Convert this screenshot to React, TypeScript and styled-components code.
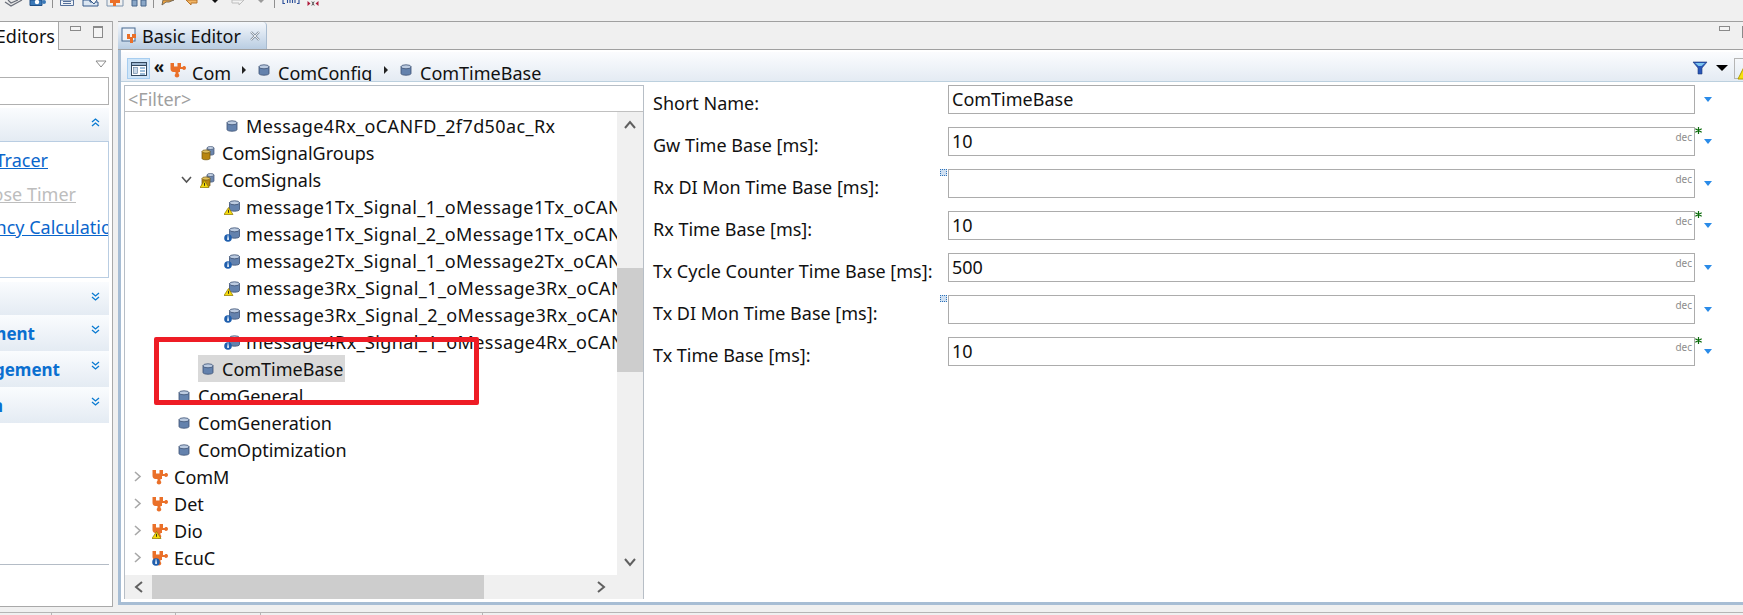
import styled, {createGlobalStyle} from 'styled-components';

type Overlay = 'warn' | 'info' | undefined;

interface TreeNode {
  label: string;
  depth: number;
  icon: 'cyl' | 'group' | 'module';
  overlay?: Overlay;
  arrow?: 'open' | 'closed';
  selected?: boolean;
}

const treeNodes: TreeNode[] = [
  {label: 'Message4Rx_oCANFD_2f7d50ac_Rx', depth: 3, icon: 'cyl'},
  {label: 'ComSignalGroups', depth: 2, icon: 'group'},
  {label: 'ComSignals', depth: 2, icon: 'group', overlay: 'warn', arrow: 'open'},
  {label: 'message1Tx_Signal_1_oMessage1Tx_oCANFD_2f7d50ac_Tx', depth: 3, icon: 'cyl', overlay: 'warn'},
  {label: 'message1Tx_Signal_2_oMessage1Tx_oCANFD_2f7d50ac_Tx', depth: 3, icon: 'cyl', overlay: 'info'},
  {label: 'message2Tx_Signal_1_oMessage2Tx_oCANFD_2f7d50ac_Tx', depth: 3, icon: 'cyl', overlay: 'info'},
  {label: 'message3Rx_Signal_1_oMessage3Rx_oCANFD_2f7d50ac_Rx', depth: 3, icon: 'cyl', overlay: 'warn'},
  {label: 'message3Rx_Signal_2_oMessage3Rx_oCANFD_2f7d50ac_Rx', depth: 3, icon: 'cyl', overlay: 'info'},
  {label: 'message4Rx_Signal_1_oMessage4Rx_oCANFD_2f7d50ac_Rx', depth: 3, icon: 'cyl', overlay: 'info'},
  {label: 'ComTimeBase', depth: 2, icon: 'cyl', selected: true},
  {label: 'ComGeneral', depth: 1, icon: 'cyl'},
  {label: 'ComGeneration', depth: 1, icon: 'cyl'},
  {label: 'ComOptimization', depth: 1, icon: 'cyl'},
  {label: 'ComM', depth: 0, icon: 'module', arrow: 'closed'},
  {label: 'Det', depth: 0, icon: 'module', arrow: 'closed'},
  {label: 'Dio', depth: 0, icon: 'module', overlay: 'warn', arrow: 'closed'},
  {label: 'EcuC', depth: 0, icon: 'module', overlay: 'info', arrow: 'closed'},
];

const formRows = [
  {label: 'Short Name:', value: 'ComTimeBase'},
  {label: 'Gw Time Base [ms]:', value: '10', dec: true, star: true},
  {label: 'Rx DI Mon Time Base [ms]:', value: '', dec: true, marker: true},
  {label: 'Rx Time Base [ms]:', value: '10', dec: true, star: true},
  {label: 'Tx Cycle Counter Time Base [ms]:', value: '500', dec: true},
  {label: 'Tx DI Mon Time Base [ms]:', value: '', dec: true, marker: true},
  {label: 'Tx Time Base [ms]:', value: '10', dec: true, star: true},
];

function OverlayMark({kind}:{kind:Overlay}){
  if(kind === 'warn'){
    return (
      <g>
        <path d="M4.5 8.5 L9 15.5 H0 Z" fill="#f5d90a" stroke="#8a7500" strokeWidth="0.7"/>
        <rect x="4.1" y="10.8" width="0.9" height="3" fill="#222"/>
      </g>
    );
  }
  if(kind === 'info'){
    return (
      <g>
        <circle cx="4" cy="12" r="3.8" fill="#1f5fae"/>
        <rect x="3.3" y="11.2" width="1.5" height="2.8" fill="#fff"/>
        <rect x="3.3" y="9.6" width="1.5" height="1" fill="#fff"/>
      </g>
    );
  }
  return null;
}

function CylIcon({overlay}:{overlay?:Overlay}){
  return (
    <svg width="16" height="16" viewBox="0 0 16 16">
      <g transform={overlay ? 'translate(2.5,-1)' : undefined}>
        <path d="M3 4.5 V11.5 C3 13.8 13 13.8 13 11.5 V4.5 Z" fill="#6482ad" stroke="#3a4f72" strokeWidth="0.8"/>
        <ellipse cx="8" cy="4.8" rx="5" ry="2" fill="#bccbe0" stroke="#3a4f72" strokeWidth="0.8"/>
      </g>
      <OverlayMark kind={overlay}/>
    </svg>
  );
}

function GroupIcon({overlay}:{overlay?:Overlay}){
  return (
    <svg width="16" height="16" viewBox="0 0 16 16">
      <path d="M7 3 V9 C7 10.5 14 10.5 14 9 V3 Z" fill="#6c86ad" stroke="#3f5273" strokeWidth="0.7"/>
      <ellipse cx="10.5" cy="3" rx="3.5" ry="1.5" fill="#c3d0e2" stroke="#3f5273" strokeWidth="0.7"/>
      <path d="M2 6.5 V13.5 C2 15.2 10 15.2 10 13.5 V6.5 Z" fill="#b8860f" stroke="#6d5208" strokeWidth="0.7"/>
      <ellipse cx="6" cy="6.5" rx="4" ry="1.6" fill="#e2c15d" stroke="#6d5208" strokeWidth="0.7"/>
      <OverlayMark kind={overlay}/>
    </svg>
  );
}

function ModuleIcon({overlay}:{overlay?:Overlay}){
  return (
    <svg width="16" height="16" viewBox="0 0 16 16">
      <path d="M0.5 1 H4 V4.5 H7.5 V1 H11 V5 H12.5 C13 3.6 16 3.8 16 6 C16 8.2 13 8.4 12.5 7 H10 V10 H8.5 V12 C9.8 12.6 9.6 15.4 7 15.4 C4.4 15.4 4.2 12.6 5.5 12 V10 H3.5 C1.5 10 0.5 8.5 0.5 6.5 Z" fill="#ea7029"/>
      <OverlayMark kind={overlay}/>
    </svg>
  );
}

function NodeIcon({icon, overlay}:{icon:TreeNode['icon'], overlay?:Overlay}){
  if(icon === 'group') return <GroupIcon overlay={overlay}/>;
  if(icon === 'module') return <ModuleIcon overlay={overlay}/>;
  return <CylIcon overlay={overlay}/>;
}

function Chevron({dir}:{dir:'up'|'down'}){
  const first = dir === 'down' ? 'M1 1 L4.5 4 L8 1' : 'M1 4 L4.5 1 L8 4';
  const second = dir === 'down' ? 'M1 5 L4.5 8 L8 5' : 'M1 8 L4.5 5 L8 8';
  return (
    <ChevronSvg width="9" height="9" viewBox="0 0 9 9">
      <path d={first} fill="none" stroke="#0a7ad1" strokeWidth="1.3"/>
      <path d={second} fill="none" stroke="#0a7ad1" strokeWidth="1.3"/>
    </ChevronSvg>
  );
}

function ScrollArrow({d}:{d:string}){
  return (
    <svg width="12" height="12" viewBox="0 0 12 12">
      <path d={d} fill="none" stroke="#606060" strokeWidth="2"/>
    </svg>
  );
}

// the toolbar is cut by the top of the picture: only the lower part of each icon shows
const toolGroups = [
  {slot: 24, lead: 2, icons: [
    <svg width="20" height="7" viewBox="0 0 20 7"><path d="M1 2 L7 6 L18 0 M4 0 L7 3 L14 0" fill="#e8e8e8" stroke="#6a6f7a" strokeWidth="1.2"/></svg>,
    <svg width="18" height="7" viewBox="0 0 18 7"><path d="M1 0 V5.5 H13 V0 Z" fill="#3b79b8" stroke="#1f4f86"/><circle cx="8" cy="2" r="2.2" fill="#fff"/><circle cx="15" cy="2" r="2" fill="#3b79b8"/></svg>,
  ]},
  {slot: 24, lead: 2, icons: [
    <svg width="14" height="7" viewBox="0 0 14 7"><path d="M0.5 0 V5.5 H13.5 V0 Z" fill="#eef2f7" stroke="#55709a"/><path d="M3 1.5 H11 M3 3.5 H11" stroke="#55709a"/></svg>,
    <svg width="18" height="7" viewBox="0 0 18 7"><path d="M1 0 V6 H16 V2 H8 V0 Z" fill="#dbe6f2" stroke="#34598a"/><path d="M8 0 L12 4 L15 0" fill="#f7f7f7" stroke="#34598a"/></svg>,
    <svg width="18" height="7" viewBox="0 0 18 7"><path d="M1 6 H17 M1 0 V6 M17 0 V6" fill="none" stroke="#7d93ad"/><path d="M4 0 H14 V3 H10 V6 H7 V3 H4 Z" fill="#ea7029"/></svg>,
    <svg width="16" height="7" viewBox="0 0 16 7"><path d="M1 0 V6 H6 V0 Z M10 0 V6 H15 V0 Z" fill="#8ba7c7" stroke="#47658a"/></svg>,
  ]},
  {slot: 23, lead: 3, icons: [
    <svg width="16" height="7" viewBox="0 0 16 7"><path d="M2 0 L1 5 L5 2 H8 L13 0 Z" fill="#f0a33c" stroke="#7b6a52"/></svg>,
    <svg width="16" height="7" viewBox="0 0 16 7"><path d="M2 0 L7 5 V3 H13 V0 Z" fill="#f1b565" stroke="#b8742a"/></svg>,
    <svg width="8" height="5" viewBox="0 0 8 5"><path d="M1 0 H7 L4 3 Z" fill="#111"/></svg>,
    <svg width="16" height="7" viewBox="0 0 16 7"><path d="M14 0 L9 5 V3 H2 V0 Z" fill="#f3f3f3" stroke="#bdbdbd"/></svg>,
    <svg width="8" height="5" viewBox="0 0 8 5"><path d="M1 0 H7 L4 3 Z" fill="#9a9a9a"/></svg>,
  ]},
  {slot: 22, lead: 5, icons: [
    <svg width="18" height="5" viewBox="0 0 18 5"><path d="M1 0 V3.5 H3 M17 0 V3.5 H15 M5.5 0 V3 M8 0 V3 M10.5 0 V3 M13 0 V3" fill="none" stroke="#2b4f9a" strokeWidth="1.1"/></svg>,
    <svg width="12" height="7" viewBox="0 0 12 7"><path d="M0.5 1 L3.5 3.5 L0.5 6 Z M11.5 1 L8.5 3.5 L11.5 6 Z" fill="#b01c3c"/><path d="M4.8 1.5 L7.2 5.5 M7.2 1.5 L4.8 5.5" stroke="#5a5a5a"/></svg>,
  ]},
];

export default function App(){
  return (
    <>
      <GlobalStyle/>
      <Page>
        <Toolbar>
          {toolGroups.map((group, i) => (
            <ToolGroup key={i} $lead={group.lead}>
              {group.icons.map((icon, j) => <ToolSlot key={j} $width={group.slot}>{icon}</ToolSlot>)}
            </ToolGroup>
          ))}
        </Toolbar>
        <Main>
          <LeftPanel>
            <TabStrip>
              <LeftTab><span>Project Editors</span></LeftTab>
              <WindowButtons>
                <MinButton/>
                <MaxButton/>
              </WindowButtons>
            </TabStrip>
            <LeftBody>
              <MenuRow>
                <svg width="12" height="8" viewBox="0 0 12 8"><path d="M1 1 H11 L6 7 Z" fill="#fff" stroke="#8a8a8a"/></svg>
              </MenuRow>
              <SearchBox/>
              <SectionHeader $height={33} $top={3}>
                <Chevron dir="up"/>
              </SectionHeader>
              <SectionBox>
                <LinkRow $end={60}><a>Stack Tracer</a></LinkRow>
                <LinkRow $end={32} $disabled><a>Purpose Timer</a></LinkRow>
                <LinkRow $end={-15}><a>Frequency Calculation</a></LinkRow>
              </SectionBox>
              <SectionHeader $height={33} $top={4}><Chevron dir="down"/></SectionHeader>
              <SectionHeader $height={36}><SectionTitle $end={74}>Development</SectionTitle><Chevron dir="down"/></SectionHeader>
              <SectionHeader $height={36}><SectionTitle $end={49}>Management</SectionTitle><Chevron dir="down"/></SectionHeader>
              <SectionHeader $height={36}><SectionTitle $end={106}>Validation</SectionTitle><Chevron dir="down"/></SectionHeader>
              <LeftFooter/>
            </LeftBody>
          </LeftPanel>
          <EditorPanel>
            <TabStrip>
              <EditorTab>
                <TabIcon width="18" height="18" viewBox="0 0 18 18">
                  <rect x="1" y="1" width="13" height="13" fill="#eef3f9" stroke="#46698f"/>
                  <path d="M6 7 H9 V10 H11 V7 H15 V11 H12 V16 H9 V12 H6 Z" fill="#ea7029"/>
                </TabIcon>
                <span>Basic Editor</span>
                <CloseIcon width="12" height="12" viewBox="0 0 12 12">
                  <path d="M2 2 L10 10 M10 2 L2 10" stroke="#8d99a6" strokeWidth="2.4"/>
                  <path d="M2 2 L10 10 M10 2 L2 10" stroke="#fff" strokeWidth="0.8"/>
                </CloseIcon>
              </EditorTab>
              <EditorWindowButtons>
                <MinButton/>
                <MaxButton/>
              </EditorWindowButtons>
            </TabStrip>
            <EditorBody>
              <Breadcrumb>
                <CrumbToggle>
                  <svg width="16" height="14" viewBox="0 0 16 14">
                    <rect x="0.5" y="0.5" width="15" height="13" fill="#fff" stroke="#33495f"/>
                    <rect x="0.5" y="0.5" width="15" height="3" fill="#9db6cf" stroke="#33495f"/>
                    <rect x="2.5" y="5.5" width="4" height="6" fill="#c8d8e8" stroke="#5a7a99" strokeWidth="0.6"/>
                    <path d="M9 6 H14 M9 9 H14 M9 12 H14" stroke="#3f7fb5"/>
                  </svg>
                </CrumbToggle>
                <CrumbBack>«</CrumbBack>
                <CrumbIcon $left={2}><ModuleIcon/></CrumbIcon>
                <CrumbText $width={50}>Com</CrumbText>
                <CrumbSep/>
                <CrumbIcon><CylIcon/></CrumbIcon>
                <CrumbText $width={106}>ComConfig</CrumbText>
                <CrumbSep/>
                <CrumbIcon><CylIcon/></CrumbIcon>
                <CrumbText $width={130}>ComTimeBase</CrumbText>
                <CrumbTools>
                  <svg width="16" height="14" viewBox="0 0 16 14">
                    <path d="M1 1 H15 L10 7 V13 H6 V7 Z" fill="#2a56b8" stroke="#1b3a7a" strokeWidth="0.6"/>
                    <path d="M3 2 H13 L9.5 5 H6.5 Z" fill="#7cc4ef"/>
                  </svg>
                  <MenuArrow/>
                  <WarnToggle>
                    <svg width="16" height="16" viewBox="0 0 16 16"><path d="M8 1 L15 15 H1 Z" fill="#f7e30a" stroke="#b19c00"/></svg>
                  </WarnToggle>
                </CrumbTools>
              </Breadcrumb>
              <SplitArea>
                <TreePane>
                  <FilterBox>&lt;Filter&gt;</FilterBox>
                  <TreeScrollRow>
                    <TreeList>
                      {treeNodes.map((node) => (
                        <TreeRow key={node.label} $depth={node.depth}>
                          <Twisty>
                            {node.arrow === 'open' && <svg width="11" height="8" viewBox="0 0 11 8"><path d="M1 1 L5.5 6 L10 1" fill="none" stroke="#555" strokeWidth="1.6"/></svg>}
                            {node.arrow === 'closed' && <svg width="8" height="11" viewBox="0 0 8 11"><path d="M1 1 L6 5.5 L1 10" fill="none" stroke="#a8a8a8" strokeWidth="1.6"/></svg>}
                          </Twisty>
                          <NodeLabel $selected={node.selected} $wide={node.label.includes('_')}>
                            <NodeIcon icon={node.icon} overlay={node.overlay}/>
                            <span>{node.label}</span>
                          </NodeLabel>
                        </TreeRow>
                      ))}
                    </TreeList>
                    <VScroll>
                      <ScrollButton><ScrollArrow d="M1 9 L6 3 L11 9"/></ScrollButton>
                      <VTrack><VThumb/></VTrack>
                      <ScrollButton><ScrollArrow d="M1 3 L6 9 L11 3"/></ScrollButton>
                    </VScroll>
                  </TreeScrollRow>
                  <HScroll>
                    <HButton><ScrollArrow d="M9 1 L3 6 L9 11"/></HButton>
                    <HThumb/>
                    <HButton><ScrollArrow d="M3 1 L9 6 L3 11"/></HButton>
                  </HScroll>
                </TreePane>
                <FormPane>
                  {formRows.map((row) => (
                    <FormRow key={row.label}>
                      <FormLabel>{row.label}</FormLabel>
                      <FieldWrap>
                        {row.marker && <FieldMarker/>}
                        <Field>
                          {row.value}
                          {row.dec && <DecTag>dec</DecTag>}
                        </Field>
                        {row.star && (
                          <FieldStar width="7" height="7" viewBox="0 0 7 7">
                            <path d="M3.5 0 V7 M0.3 1.7 L6.7 5.3 M6.7 1.7 L0.3 5.3" stroke="#0b6b0b" strokeWidth="1.2"/>
                          </FieldStar>
                        )}
                      </FieldWrap>
                      <FieldMenu/>
                    </FormRow>
                  ))}
                </FormPane>
              </SplitArea>
            </EditorBody>
          </EditorPanel>
        </Main>
        <StatusStrip>
          <StatusCell $width={52}/>
          <StatusCell $width={8} $blank/>
          <StatusCell $width={116}/>
          <StatusCell $width={85}/>
          <StatusCell $width={222}/>
        </StatusStrip>
        <Annotation/>
      </Page>
    </>
  );
}

const GlobalStyle = createGlobalStyle`
  html, body {
    margin:0;
    padding:0;
    background:#f0f0f0;
    overflow:hidden;
  }
`

const Page = styled.div`
  position:relative;
  width:1743px;
  height:615px;
  display:flex;
  flex-direction:column;
  overflow:hidden;
  background:#f0f0f0;
  font-family:"Noto Sans", "Noto Sans CJK SC", sans-serif;
  font-size:18px;
  color:#111;
`

const Toolbar = styled.div`
  height:21px;
  display:flex;
  overflow:hidden;
  flex:none;
`

const ToolGroup = styled.div<{$lead:number}>`
  display:flex;
  height:8px;
  padding-left:${props => props.$lead}px;
  padding-right:2px;
  border-right:1px solid #8f8f8f;
  &:last-child{border-right:0;}
`

const ToolSlot = styled.div<{$width:number}>`
  width:${props => props.$width}px;
  height:7px;
  display:flex;
  justify-content:center;
  align-items:flex-start;
`

const Main = styled.div`
  flex:1;
  display:flex;
  gap:5px;
  min-height:0;
`

const LeftPanel = styled.div`
  width:112px;
  margin-bottom:5px;
  display:flex;
  flex-direction:column;
  border-right:1px solid #a9a9a9;
  border-bottom:1px solid #a9a9a9;
  box-sizing:content-box;
  flex:none;
`

const TabStrip = styled.div`
  height:27px;
  display:flex;
  align-items:stretch;
  border-top:1px solid #a0a0a0;
  border-bottom:1px solid #a0a0a0;
  background:#f0f0f0;
  flex:none;
`

const LeftTab = styled.div`
  width:58px;
  display:flex;
  justify-content:flex-end;
  align-items:center;
  overflow:hidden;
  background:#fff;
  border-right:1px solid #a9a9a9;
  margin-bottom:-1px;
  white-space:nowrap;
  & > span{
    padding-right:3px;
    line-height:24px;
  }
`

const WindowButtons = styled.div`
  display:flex;
  gap:12px;
  padding:4px 0 0 11px;
`

const MinButton = styled.div`
  width:9px;
  height:3px;
  border:1px solid #8a8a8a;
  background:#f4f4f4;
`

const MaxButton = styled.div`
  width:8px;
  height:9px;
  border:1px solid #8a8a8a;
  border-top-width:2px;
  background:#f4f4f4;
`

const LeftBody = styled.div`
  flex:1;
  background:#fff;
  display:flex;
  flex-direction:column;
  padding-right:3px;
  min-height:0;
`

const MenuRow = styled.div`
  height:27px;
  display:flex;
  justify-content:flex-end;
  align-items:center;
  padding-right:2px;
  flex:none;
`

const SearchBox = styled.div`
  height:28px;
  box-sizing:border-box;
  border:1px solid #b0b0b0;
  border-left:0;
  flex:none;
`

const SectionHeader = styled.div<{$height:number, $top?:number}>`
  position:relative;
  height:${props => props.$height}px;
  margin-top:${props => props.$top ?? 0}px;
  background:linear-gradient(#fafcfe, #e4ebf3);
  overflow:hidden;
  flex:none;
`

const ChevronSvg = styled.svg`
  position:absolute;
  right:9px;
  top:10px;
`

const SectionTitle = styled.div<{$end:number}>`
  display:flex;
  justify-content:flex-end;
  white-space:nowrap;
  padding-right:${props => props.$end}px;
  font-weight:700;
  font-size:17px;
  line-height:38px;
  color:#0a6fd0;
`

const SectionBox = styled.div`
  height:137px;
  box-sizing:border-box;
  border:1px solid #b9cde2;
  border-left:0;
  background:#fff;
  padding-top:2px;
  overflow:hidden;
  flex:none;
`

const LinkRow = styled.div<{$end:number, $disabled?:boolean}>`
  height:33.5px;
  display:flex;
  justify-content:flex-end;
  white-space:nowrap;
  margin-right:${props => props.$end}px;
  line-height:33px;
  & > a{
    color:${props => props.$disabled ? '#bdbdbd' : '#0a66cc'};
    text-decoration:underline;
  }
`

const LeftFooter = styled.div`
  height:30px;
  margin-top:141px;
  border-top:1px solid #b4bcc6;
  flex:none;
`

const EditorPanel = styled.div`
  flex:1;
  min-width:0;
  display:flex;
  flex-direction:column;
  margin-bottom:7px;
`

const EditorTab = styled.div`
  width:149px;
  box-sizing:border-box;
  display:flex;
  align-items:center;
  gap:3px;
  padding-left:3px;
  background:linear-gradient(#f5f8fc, #b9cde2);
  border-radius:4px 4px 0 0;
  border-right:1px solid #a9bcd0;
  white-space:nowrap;
`

const TabIcon = styled.svg`
  flex:none;
`

const CloseIcon = styled.svg`
  margin-left:5px;
  flex:none;
`

const EditorWindowButtons = styled(WindowButtons)`
  margin-left:auto;
  padding-left:0;
  padding-right:0;
  margin-right:-9px;
`

const EditorBody = styled.div`
  flex:1;
  min-height:0;
  display:flex;
  flex-direction:column;
  background:#fff;
  border-left:3px solid #a7bdd4;
  border-bottom:3px solid #a7bdd4;
  padding-top:2px;
`

const Breadcrumb = styled.div`
  height:30px;
  box-sizing:border-box;
  display:flex;
  align-items:center;
  padding-left:6px;
  background:linear-gradient(#fbfcfe, #e4ebf3);
  border-bottom:1px solid #bcd0de;
  overflow:hidden;
  flex:none;
`

const CrumbToggle = styled.div`
  width:23px;
  height:21px;
  margin-top:4px;
  box-sizing:border-box;
  display:flex;
  align-items:center;
  justify-content:center;
  background:#cfe5f8;
  border:1px solid #a6cdf0;
  flex:none;
`

const CrumbBack = styled.span`
  width:18px;
  text-align:center;
  font-size:17px;
  font-weight:700;
  line-height:18px;
  margin-top:1px;
  flex:none;
`

const CrumbIcon = styled.span<{$left?:number}>`
  display:flex;
  margin:7px 6px 0 ${props => props.$left ?? 0}px;
  flex:none;
`

const CrumbText = styled.span<{$width:number}>`
  width:${props => props.$width}px;
  white-space:nowrap;
  line-height:29px;
  height:29px;
  padding-top:7px;
  box-sizing:border-box;
  flex:none;
`

const CrumbSep = styled.span`
  width:0;
  height:0;
  margin:7px 10px 0 0;
  border-left:4px solid #222;
  border-top:4px solid transparent;
  border-bottom:4px solid transparent;
  flex:none;
`

const CrumbTools = styled.div`
  margin-left:auto;
  display:flex;
  align-items:center;
  gap:8px;
  margin-right:-15px;
  margin-top:3px;
  flex:none;
`

const MenuArrow = styled.span`
  width:0;
  height:0;
  border-top:6px solid #000;
  border-left:6px solid transparent;
  border-right:6px solid transparent;
`

const WarnToggle = styled.div`
  width:24px;
  height:21px;
  box-sizing:border-box;
  border:1px solid #b5b5b5;
  padding:2px;
  margin-left:-2px;
`

const SplitArea = styled.div`
  flex:1;
  min-height:0;
  display:flex;
  padding:3px 0 3px 0;
`

const TreePane = styled.div`
  width:520px;
  margin-left:3px;
  box-sizing:border-box;
  display:flex;
  flex-direction:column;
  border:1px solid #b7bec6;
  border-bottom:0;
  flex:none;
`

const FilterBox = styled.div`
  height:26px;
  box-sizing:border-box;
  padding-left:3px;
  line-height:26px;
  color:#a0a0a0;
  border-bottom:1px solid #c0c0c0;
  flex:none;
`

const TreeScrollRow = styled.div`
  flex:1;
  min-height:0;
  display:flex;
`

const TreeList = styled.div`
  flex:1;
  min-width:0;
  overflow:hidden;
`

const TreeRow = styled.div<{$depth:number}>`
  height:27px;
  display:flex;
  align-items:center;
  padding-left:${props => 5 + props.$depth * 24}px;
  white-space:nowrap;
`

const Twisty = styled.span`
  width:16px;
  height:16px;
  display:flex;
  align-items:center;
  justify-content:center;
  flex:none;
`

const NodeLabel = styled.div<{$selected?:boolean, $wide?:boolean}>`
  display:flex;
  align-items:center;
  gap:6px;
  height:27px;
  padding:0 2px;
  margin-left:4px;
  letter-spacing:${props => props.$wide ? '0.4px' : '0'};
  background:${props => props.$selected ? '#d9d9d9' : 'transparent'};
  & > svg{flex:none;}
`

const VScroll = styled.div`
  width:26px;
  display:flex;
  flex-direction:column;
  background:#f0f0f0;
  flex:none;
`

const ScrollButton = styled.div`
  height:26px;
  display:flex;
  align-items:center;
  justify-content:center;
  flex:none;
`

const VTrack = styled.div`
  flex:1;
  padding-top:130px;
`

const VThumb = styled.div`
  height:104px;
  background:#cdcdcd;
`

const HScroll = styled.div`
  height:24px;
  display:flex;
  align-items:center;
  background:#f0f0f0;
  flex:none;
`

const HButton = styled.div`
  width:27px;
  height:24px;
  display:flex;
  align-items:center;
  justify-content:center;
  flex:none;
  &:last-child{margin-left:103px;}
`

const HThumb = styled.div`
  width:332px;
  height:24px;
  background:#cdcdcd;
  flex:none;
`

const FormPane = styled.div`
  flex:1;
  min-width:0;
  padding-left:9px;
`

const FormRow = styled.div`
  height:42px;
  display:grid;
  grid-template-columns:295px 747px 1fr;
  align-items:start;
`

const FormLabel = styled.div`
  line-height:29px;
  margin-top:4px;
  white-space:nowrap;
`

const FieldWrap = styled.div`
  position:relative;
`

const Field = styled.div`
  position:relative;
  height:29px;
  box-sizing:border-box;
  border:1px solid #acacac;
  padding-left:3px;
  line-height:26px;
  white-space:nowrap;
`

const DecTag = styled.span`
  position:absolute;
  right:2px;
  top:2px;
  font-size:10px;
  line-height:14px;
  color:#8c8c8c;
`

const FieldStar = styled.svg`
  position:absolute;
  left:100%;
  top:0;
`

const FieldMarker = styled.span`
  position:absolute;
  right:100%;
  top:0;
  margin-right:1px;
  width:7px;
  height:7px;
  box-sizing:border-box;
  background:#cfe0f2;
  border:1px dotted #2f72b8;
`

const FieldMenu = styled.span`
  width:0;
  height:0;
  margin:12px 0 0 9px;
  border-top:5px solid #2a8be8;
  border-left:4px solid transparent;
  border-right:4px solid transparent;
`

const StatusStrip = styled.div`
  height:2px;
  display:flex;
  border-top:1px solid #b5b5b5;
  flex:none;
`

const StatusCell = styled.div<{$width:number, $blank?:boolean}>`
  width:${props => props.$width}px;
  border-right:1px solid ${props => props.$blank ? 'transparent' : '#b5b5b5'};
  box-sizing:border-box;
`

const Annotation = styled.div`
  position:absolute;
  left:154px;
  top:337px;
  width:325px;
  height:68px;
  box-sizing:border-box;
  border:5px solid #ee1c25;
  border-radius:2px;
  pointer-events:none;
`
